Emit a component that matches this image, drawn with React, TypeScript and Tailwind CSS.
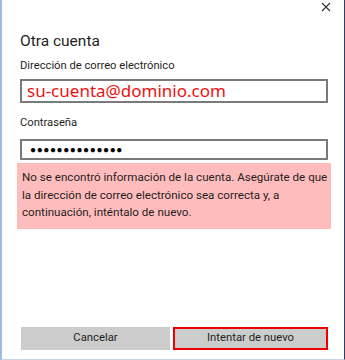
import React from "react";

export default function App() {
  const font = { fontFamily: 'Roboto, "Noto Sans", sans-serif' };
  const emailFont = { fontFamily: '"Noto Sans", "Open Sans", sans-serif' };
  return (
    <div
      className="w-[345px] h-[360px] bg-white flex flex-col border-l-2 border-l-[#9bbbe0] border-r border-r-[#2c3d6e] border-b border-b-[#c8d4e6] text-[#1f1f1f]"
      style={font}
    >
      <div className="flex justify-end pr-[13px] pt-[1px] h-[20px]">
        <svg width="10" height="10" viewBox="0 0 10 10" className="mt-[1px]">
          <path d="M1 1 L9 9 M9 1 L1 9" stroke="#333" strokeWidth="1.1" />
        </svg>
      </div>
      <div className="pl-[17px] pr-[15px] flex flex-col flex-1">
        <div className="mt-[10px] text-[15.5px] leading-[22px] pl-[1px]">Otra cuenta</div>
        <div className="mt-[6px] text-[11.2px] leading-[16px] pl-[1px]">Dirección de correo electrónico</div>
        <div
          className="mt-[5px] mx-[1px] h-[24px] border-2 border-[#7a7a7a] flex items-center pl-[5px] text-[17px] text-[#ee1111]"
          style={emailFont}
        >
          su-cuenta@dominio.com
        </div>
        <div className="mt-[12px] text-[11.2px] leading-[16px] pl-[1px]">Contraseña</div>
        <div
          className="mt-[8px] mx-[1px] h-[21px] border-2 border-[#7a7a7a] flex items-center pl-[8px] text-[10px] tracking-[0.6px] text-black"
          style={emailFont}
        >
          ●●●●●●●●●●●●●●
        </div>
        <div className="mt-[3px] -mx-[2px] h-[66px] bg-[#ffbcbc] pl-[5px] pr-[2px] pt-[6px] text-[11.6px] leading-[17.5px] text-[#1f1f1f] whitespace-nowrap overflow-hidden">
          No se encontró información de la cuenta. Asegúrate de que
          <br />
          la dirección de correo electrónico sea correcta y, a
          <br />
          continuación, inténtalo de nuevo.
        </div>
        <div className="flex-1" />
        <div className="flex gap-[3px] mb-[9px] pl-[2px] pr-[1px]">
          <button className="w-[151px] h-[23px] bg-[#cccccc] text-[11.3px] text-[#1f1f1f] flex items-center justify-center">
            Cancelar
          </button>
          <button className="w-[157px] h-[23px] bg-[#cccccc] border-2 border-[#ee0000] text-[11.3px] text-[#1f1f1f] flex items-center justify-center">
            Intentar de nuevo
          </button>
        </div>
      </div>
    </div>
  );
}
